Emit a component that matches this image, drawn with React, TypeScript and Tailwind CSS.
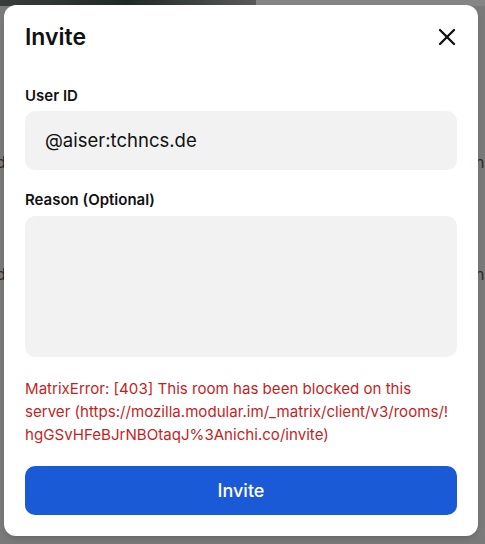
import React from 'react';
import { X } from 'lucide-react';

export default function App() {
    return (
        <div className="relative w-[485px] h-[544px] overflow-hidden bg-[#7a7a7a]" style={{ fontFamily: 'Inter, "Noto Sans", sans-serif' }}>
            {/* page behind the overlay */}
            <div className="flex flex-col">
                <div className="flex h-[6px]">
                    <div className="w-[256px] bg-gradient-to-r from-[#3a3d3a] via-[#1f2a27] to-[#5a5a58]" />
                    <div className="flex-1 bg-[#858585]" />
                </div>
                <div className="mt-[144px] flex justify-between text-[16px] text-[#2a2a2a]">
                    <span className="-ml-[4px]">d</span>
                    <span className="-mr-[4px]">n:</span>
                </div>
                <div className="mt-[88px] flex justify-between text-[16px] text-[#2a2a2a]">
                    <span className="-ml-[4px]">d</span>
                    <span className="-mr-[4px]">n:</span>
                </div>
            </div>

            {/* modal */}
            <div className="absolute left-[4px] top-[5px] w-[474px] rounded-[12px] bg-white px-[21px] pt-[16px] pb-[21px] shadow-md">
                <div className="flex items-center justify-between h-[32px]">
                    <h2 className="text-[23px] font-semibold leading-[32px] text-[#111]">Invite</h2>
                    <button className="mr-[-4px] text-[#111]" aria-label="Close">
                        <X size={28} strokeWidth={2} />
                    </button>
                </div>

                <label className="mt-[33px] block text-[15px] font-semibold leading-[20px] text-[#111]">User ID</label>
                <div className="mt-[5px] flex h-[59px] items-center rounded-[10px] bg-[#f2f2f2] px-[20px] text-[18.5px] text-[#111]">
                    @aiser:tchncs.de
                </div>

                <label className="mt-[20px] block text-[15px] font-semibold leading-[20px] text-[#111]">Reason (Optional)</label>
                <div className="mt-[6px] h-[141px] rounded-[10px] bg-[#f2f2f2]" />

                <p className="mt-[20px] break-words text-[15.1px] leading-[23px] text-[#c41f1f]">
                    MatrixError: [403] This room has been blocked on this server (https://mozilla.modular.im/_matrix/client/v3/rooms/!<wbr />hgGSvHFeBJrNBOtaqJ%3Anichi.co/invite)
                </p>

                <button className="mt-[20px] flex h-[49px] w-full items-center justify-center rounded-[10px] bg-[#1a5ad6] text-[18px] font-medium text-white">
                    Invite
                </button>
            </div>
        </div>
    );
}
